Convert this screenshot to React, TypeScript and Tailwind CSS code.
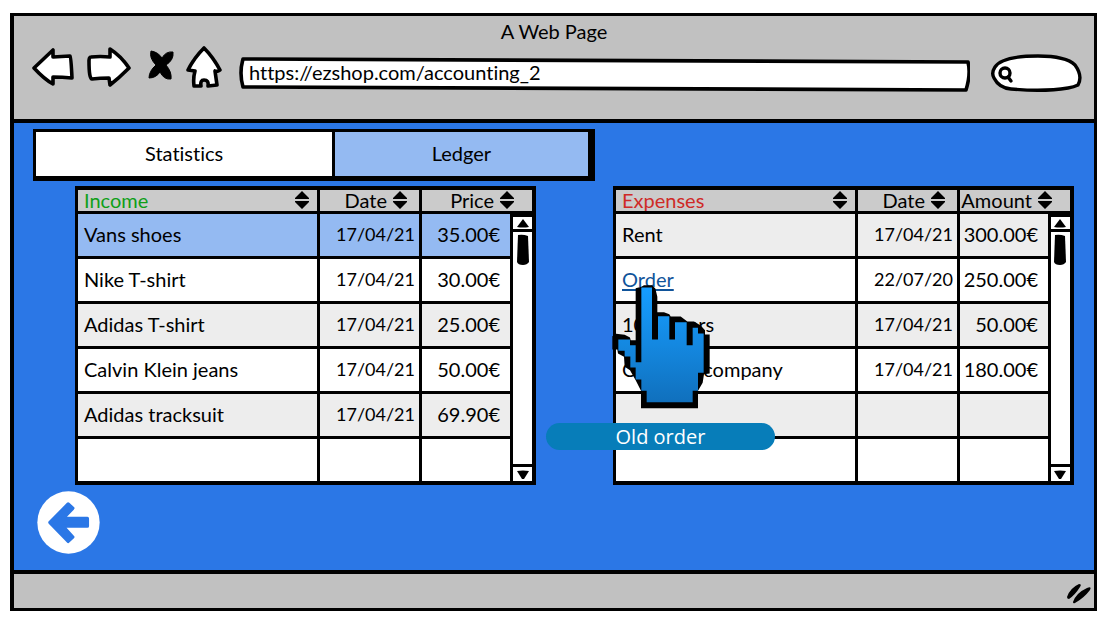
import type { ReactNode } from "react";

type Row = [string, string, string];

const income: Row[] = [
  ["Vans shoes", "17/04/21", "35.00€"],
  ["Nike T-shirt", "17/04/21", "30.00€"],
  ["Adidas T-shirt", "17/04/21", "25.00€"],
  ["Calvin Klein jeans", "17/04/21", "50.00€"],
  ["Adidas tracksuit", "17/04/21", "69.90€"],
  ["", "", ""],
];

const expenses: Row[] = [
  ["Rent", "17/04/21", "300.00€"],
  ["Order", "22/07/20", "250.00€"],
  ["100 Flyers", "17/04/21", "50.00€"],
  ["Cleaning company", "17/04/21", "180.00€"],
  ["", "", ""],
  ["", "", ""],
];

function Sorter() {
  return (
    <svg viewBox="0 0 14 18" className="h-[18px] w-[14px] shrink-0" aria-hidden="true">
      <path d="M7 0 L14 7 V8 H0 V7 Z M0 10 H14 V11 L7 18 L0 11 Z" fill="#000" />
    </svg>
  );
}

function HeaderButton({ children, className }: { children: ReactNode; className: string }) {
  return (
    <button type="button" className={`flex h-[21px] w-full items-center gap-1.5 pb-px leading-5 ${className}`}>
      {children}
      <Sorter />
    </button>
  );
}

function ScrollBar() {
  return (
    <div className="flex h-[267px] flex-col border-t-[3px] border-l-[3px] border-black bg-white">
      <button type="button" aria-label="Scroll up" className="flex h-[15px] items-center justify-center border-b-[3px] border-black">
        <svg viewBox="0 0 12 9" className="h-[9px] w-3">
          <path d="M6 0 L12 8 Q6 9 0 8 Z" />
        </svg>
      </button>
      <div className="flex flex-1 justify-center pt-0.5">
        <svg viewBox="0 0 12 31" className="h-[31px] w-3" aria-hidden="true">
          <path d="M1 1 Q6 0 11 2 L12 28 Q10 31 6 31 Q1 31 0 28 Z" />
        </svg>
      </div>
      <button type="button" aria-label="Scroll down" className="flex h-[17px] items-center justify-center border-t-[3px] border-black">
        <svg viewBox="0 0 12 9" className="h-[9px] w-3">
          <path d="M0 1 Q6 0 12 1 L7 9 H5 Z" />
        </svg>
      </button>
    </div>
  );
}

function Ledger({
  title,
  titleClass,
  amountLabel,
  rows,
  selected,
}: {
  title: string;
  titleClass: string;
  amountLabel: string;
  rows: Row[];
  selected?: number;
}) {
  return (
    <div className="border-4 border-l-[3px] border-black bg-white">
      <table className="w-full table-fixed border-separate border-spacing-0">
        <colgroup>
          <col />
          <col className="w-[102px]" />
          <col className="w-[88px]" />
          <col className="w-[22px]" />
        </colgroup>
        <thead>
          <tr className="bg-[#cbcbcb]">
            <th className="border-r-[3px] border-b-[3px] border-black p-0 font-normal">
              <HeaderButton className="justify-between pr-2 pl-1.5">
                <span className={titleClass}>{title}</span>
              </HeaderButton>
            </th>
            <th className="border-r-[3px] border-b-[3px] border-black p-0 font-normal">
              <HeaderButton className="justify-end pr-3">Date</HeaderButton>
            </th>
            <th colSpan={2} className="border-b-[3px] border-black p-0 font-normal">
              <HeaderButton className="justify-end pr-[18px]">{amountLabel}</HeaderButton>
            </th>
          </tr>
        </thead>
        <tbody>
          {rows.map(([name, date, amount], i) => {
            const last = i === rows.length - 1;
            const line = last ? "h-[42px]" : "h-[45px] border-b-[3px]";
            const tone = i === selected ? "bg-[#94baf2]" : i % 2 === 0 ? "bg-[#ededed]" : "bg-white";
            return (
              <tr key={i}>
                <td className={`border-r-[3px] border-black p-0 pb-[3px] pl-1.5 ${line} ${tone}`}>
                  {name === "Order" ? (
                    <a href="#order" className="text-[#10549a] underline underline-offset-2">
                      {name}
                    </a>
                  ) : (
                    name
                  )}
                </td>
                <td className={`border-r-[3px] border-black p-0 pr-1 pb-[3px] text-right text-[18px] ${line} ${tone}`}>{date}</td>
                <td className={`border-black p-0 pr-2.5 pb-[3px] text-right ${line} ${tone}`}>{amount}</td>
                {i === 0 && (
                  <td rowSpan={rows.length} className="p-0 align-top">
                    <ScrollBar />
                  </td>
                )}
              </tr>
            );
          })}
        </tbody>
      </table>
    </div>
  );
}

function Hand() {
  return (
    <svg viewBox="34 315 297 371" className="absolute top-[99px] -left-px h-[124px] w-[99px]" aria-hidden="true">
      <defs>
        <linearGradient id="glove" x1="0" y1="0" x2="0" y2="1">
          <stop offset="0" stopColor="#159dff" />
          <stop offset="0.5" stopColor="#1488e0" />
          <stop offset="1" stopColor="#1070bd" />
        </linearGradient>
      </defs>
      <path d="M122 320 L130 315 H154 L164 325 L170 350 V396 H190 L206 402 L210 409 H240 L260 424 H280 L300 436 L313 450 V463 H327 V580 L310 582 L306 608 L292 632 V684 H121 V632 L105 600 L88 570 L72 560 L70 530 L52 520 L50 508 H35 V468 L46 461 L72 464 L88 472 L90 480 H105 V324 Z" />
      <path
        d="M122 322 H154 V478 H172 V408 H206 V478 H223 V426 H258 V495 H276 V443 H292 V460 H309 V578 H292 V632 H276 V666 H138 V632 H122 V598 H105 V562 H89 V529 H72 V512 H53 V478 H88 V495 H105 V546 H122 Z"
        fill="url(#glove)"
      />
    </svg>
  );
}

export default function App() {
  return (
    <div className="bg-white pt-[13px] pr-[13px] pb-4 pl-2.5 font-['Lato','Noto_Sans',sans-serif] text-[20px] leading-6 text-black [font-variant-ligatures:none]">
      <div className="border-[3px] border-l-4 border-black bg-[#c1c1c1]">
        <header className="flex h-[107px] flex-col border-b-4 border-black pt-[3px]">
          <h1 className="text-center font-normal">A Web Page</h1>
          <div className="mt-[3px] flex items-center pr-3 pl-[18px]">
            <button type="button" aria-label="Back">
              <svg viewBox="0 0 42 40" className="h-10 w-[42px]" fill="#fff" stroke="#000" strokeWidth="3.6" strokeLinejoin="round">
                <path d="M2 21 L21 3 V10 L38 9 Q39 10 40 31 Q30 30 21 30 L21 37 Q12 32 2 21 Z" />
              </svg>
            </button>
            <button type="button" aria-label="Forward" className="ml-[13px]">
              <svg viewBox="0 0 44 40" className="h-10 w-11" fill="#fff" stroke="#000" strokeWidth="3.6" strokeLinejoin="round">
                <path d="M4 10 Q13 9 23 10 L23 2 Q34 9 42 21 Q32 31 23 38 L22 31 Q13 31 5 32 Q2 32 2 14 Q2 10 4 10 Z" />
              </svg>
            </button>
            <button type="button" aria-label="Stop" className="ml-[17px] pb-1">
              <svg viewBox="0 0 26 30" className="h-[30px] w-[26px]">
                <path d="M3 1 Q10 2 14 8 Q18 1 25 2 Q26 10 18 15 Q24 22 23 29 Q16 30 12 22 Q8 28 1 28 Q1 21 8 15 Q1 8 3 1 Z" stroke="#000" strokeLinejoin="round" />
              </svg>
            </button>
            <button type="button" aria-label="Home" className="ml-3">
              <svg viewBox="0 0 36 42" className="h-[42px] w-9" fill="#fff" stroke="#000" strokeWidth="3.6" strokeLinejoin="round">
                <path d="M18 2 Q27 11 34 24 Q31 26 29 25 L31 39 L22 40 Q23 34 18 34 Q14 34 15 40 L8 40 Q7 32 9 25 L2 24 Q8 12 18 2 Z" />
              </svg>
            </button>
            <div className="relative -mb-1 ml-[17px] h-9 min-w-0 flex-1 self-end">
              <svg viewBox="0 0 730 36" preserveAspectRatio="none" className="absolute inset-0 h-full w-full" aria-hidden="true">
                <path
                  d="M4 3 L728 6 Q731 18 726 34 L4 31 Q0 17 4 3 Z"
                  fill="#fff"
                  stroke="#000"
                  strokeWidth="3.6"
                  strokeLinejoin="round"
                />
              </svg>
              <input
                type="text"
                aria-label="Address"
                defaultValue="https://ezshop.com/accounting_2"
                className="relative block h-8 w-full bg-transparent px-2.5 outline-none"
              />
            </div>
            <div className="relative -mb-1 ml-5 h-[38px] w-[92px] self-end">
              <svg viewBox="0 0 92 38" className="absolute inset-0 h-full w-full" fill="#fff" stroke="#000" strokeWidth="3.4" aria-hidden="true">
                <path d="M21 35 Q9 34 4 24 Q1 19 5 13 Q12 2 48 2 Q76 2 85 11 Q93 22 88 31 Q84 33 78 34 Q54 38 21 35 Z" />
                <circle cx="15" cy="19" r="5" />
                <path d="M18 23 L21 27" strokeLinecap="round" />
              </svg>
              <input type="search" aria-label="Search" className="relative block h-full w-full bg-transparent pr-3 pl-7 outline-none" />
            </div>
          </div>
        </header>

        <main className="flex flex-col border-b-4 border-black bg-[#2b77e6] pt-1.5 pb-4">
          <div role="tablist" className="ml-[19px] flex w-[52%] border-[3px] border-r-[7px] border-b-[5px] border-black">
            <button type="button" role="tab" aria-selected="false" className="h-11 flex-[54] border-r-[3px] border-black bg-white pb-0.5">
              Statistics
            </button>
            <button type="button" role="tab" aria-selected="true" className="h-11 flex-[46] bg-[#94baf2] pb-0.5">
              Ledger
            </button>
          </div>

          <div className="mt-[5px] grid grid-cols-2 gap-[77px] pr-5 pl-[61px]">
            <Ledger title="Income" titleClass="text-[#0f9f18]" amountLabel="Price" rows={income} selected={0} />
            <div className="relative">
              <Ledger title="Expenses" titleClass="text-[#cf2a27]" amountLabel="Amount" rows={expenses} />
              <Hand />
              <div
                role="tooltip"
                className="absolute top-[237px] -left-[67px] h-[27px] w-[229px] rounded-full bg-[#077db9] text-center font-['Open_Sans',sans-serif] leading-[27px] text-white"
              >
                Old order
              </div>
            </div>
          </div>

          <a href="#back" aria-label="Go back" className="mt-1.5 ml-[23px] block w-[63px]">
            <svg viewBox="110 272 190 190" className="h-[63px] w-[63px]">
              <circle cx="205" cy="367" r="94" fill="#fff" />
              <path
                d="M149 367 L204 311 L218 324 L188 355 H262 V378 H188 L218 411 L204 424 Z"
                fill="#2b77e6"
                stroke="#2b77e6"
                strokeWidth="10"
                strokeLinejoin="round"
              />
            </svg>
          </a>
        </main>

        <footer className="flex h-[34px] items-center justify-end pt-1 pr-0.5">
          <svg viewBox="0 0 26 22" className="h-[22px] w-[26px]" aria-hidden="true">
            <path d="M1 15 Q4 6 13 2 Q16 2 14 5 Q9 13 3 17 Q1 17 1 15 Z M7 20 Q10 11 21 6 Q26 4 24 8 Q18 16 9 21 Q7 22 7 20 Z" />
          </svg>
        </footer>
      </div>
    </div>
  );
}
